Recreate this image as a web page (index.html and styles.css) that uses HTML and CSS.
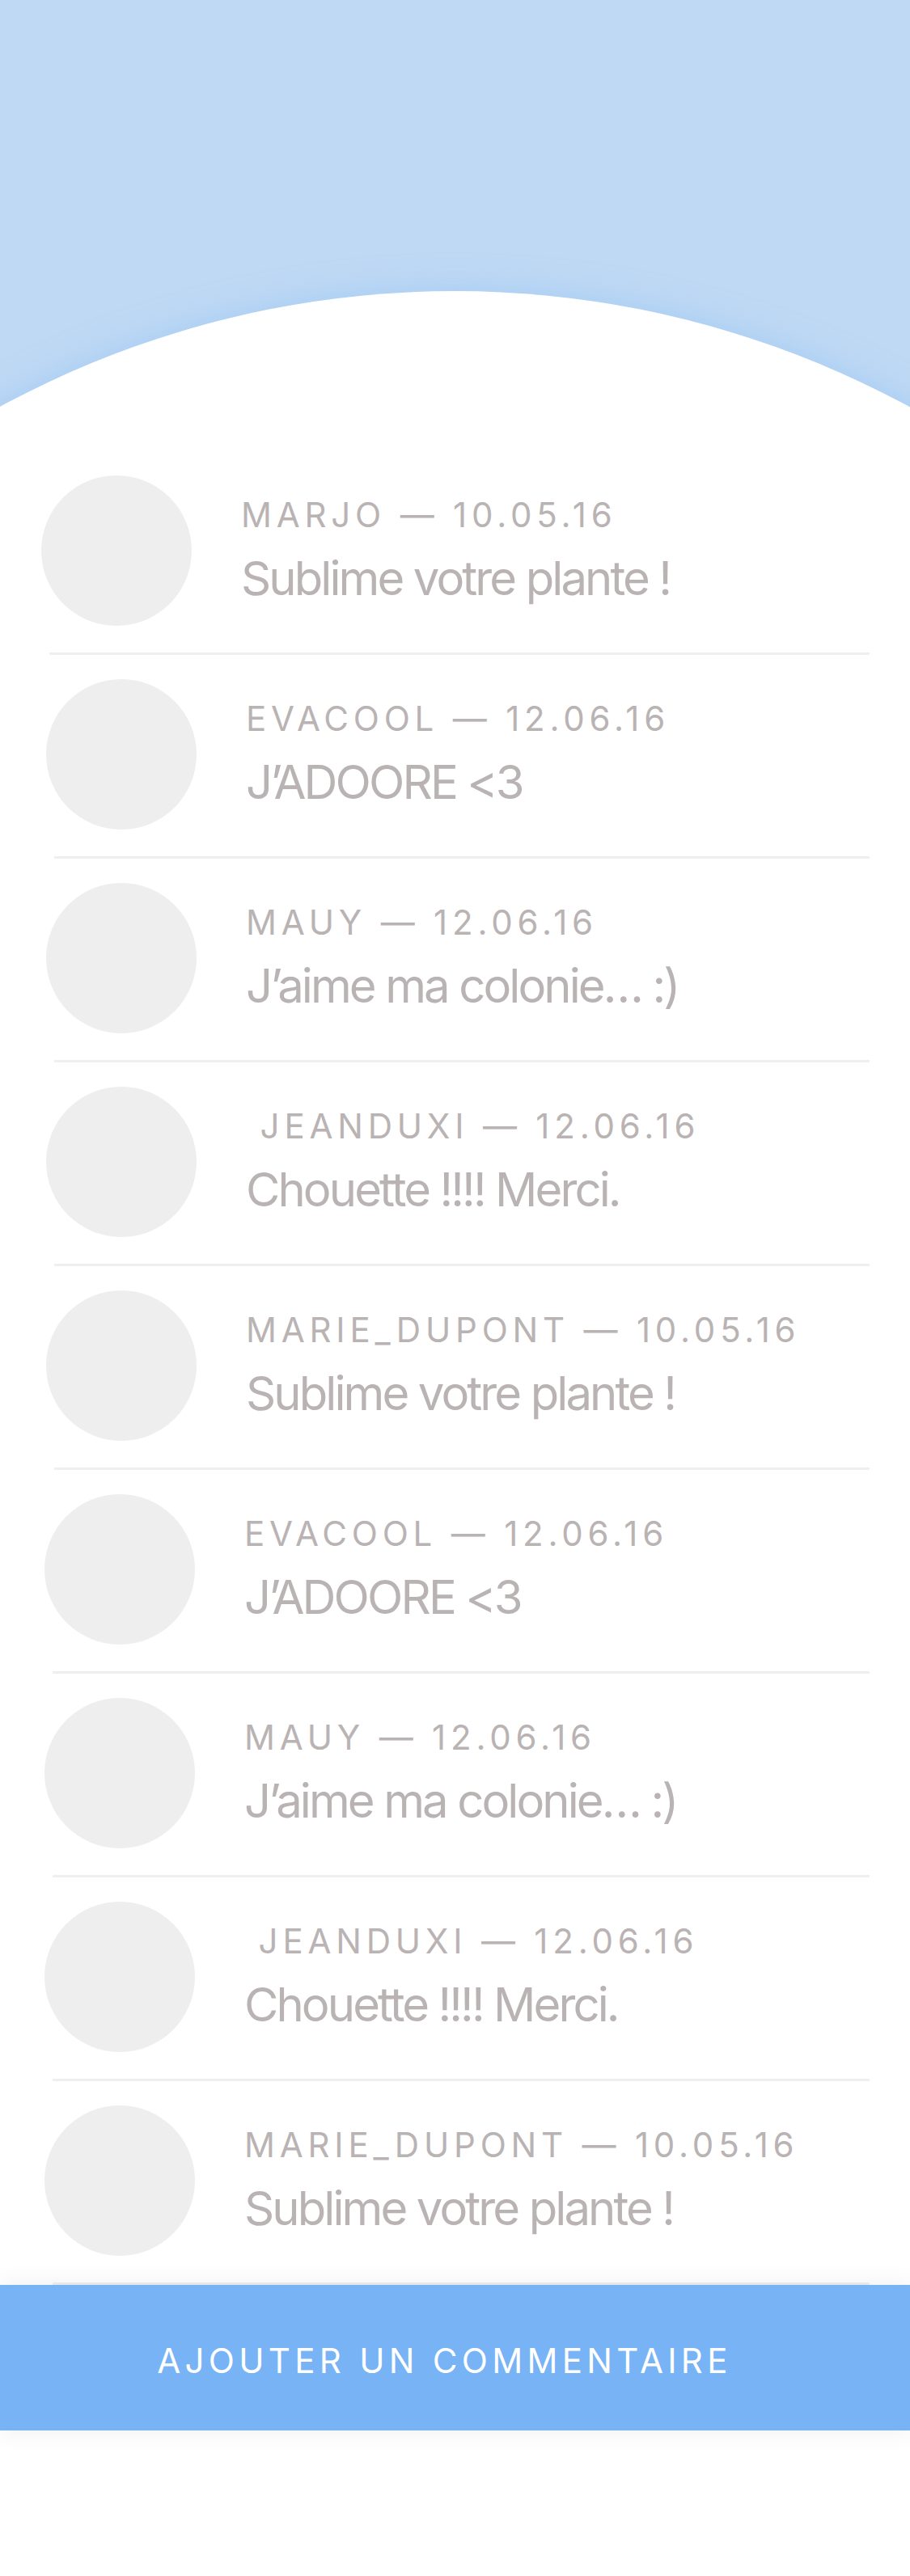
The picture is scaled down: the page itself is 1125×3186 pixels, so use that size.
FILE: index.html
```html
<!DOCTYPE html>
<html lang="fr">
<head>
<meta charset="utf-8">
<title>Commentaires</title>
<link rel="stylesheet" href="styles.css">
</head>
<body>
<div class="screen">
  <header class="hero"></header>
  <main class="comments">
    <ul class="list">
      <li class="comment comment--first">
        <div class="avatar"></div>
        <div class="body">
          <p class="meta">MARJO — 10.05.16</p>
          <p class="text">Sublime votre plante !</p>
        </div>
      </li>
      <li class="comment comment--mid">
        <div class="avatar"></div>
        <div class="body">
          <p class="meta">EVACOOL — 12.06.16</p>
          <p class="text">J’ADOORE &lt;3</p>
        </div>
      </li>
      <li class="comment comment--mid">
        <div class="avatar"></div>
        <div class="body">
          <p class="meta">MAUY — 12.06.16</p>
          <p class="text">J’aime ma colonie… :)</p>
        </div>
      </li>
      <li class="comment comment--mid">
        <div class="avatar"></div>
        <div class="body">
          <p class="meta">&nbsp;JEANDUXI — 12.06.16</p>
          <p class="text">Chouette !!!! Merci.</p>
        </div>
      </li>
      <li class="comment comment--mid">
        <div class="avatar"></div>
        <div class="body">
          <p class="meta">MARIE_DUPONT — 10.05.16</p>
          <p class="text">Sublime votre plante !</p>
        </div>
      </li>
      <li class="comment comment--last">
        <div class="avatar"></div>
        <div class="body">
          <p class="meta">EVACOOL — 12.06.16</p>
          <p class="text">J’ADOORE &lt;3</p>
        </div>
      </li>
      <li class="comment comment--last">
        <div class="avatar"></div>
        <div class="body">
          <p class="meta">MAUY — 12.06.16</p>
          <p class="text">J’aime ma colonie… :)</p>
        </div>
      </li>
      <li class="comment comment--last">
        <div class="avatar"></div>
        <div class="body">
          <p class="meta">&nbsp;JEANDUXI — 12.06.16</p>
          <p class="text">Chouette !!!! Merci.</p>
        </div>
      </li>
      <li class="comment comment--last">
        <div class="avatar"></div>
        <div class="body">
          <p class="meta">MARIE_DUPONT — 10.05.16</p>
          <p class="text">Sublime votre plante !</p>
        </div>
      </li>
    </ul>
  </main>
  <footer class="footer">
    <button class="add" type="button">AJOUTER UN COMMENTAIRE</button>
  </footer>
</div>
</body>
</html>
```

FILE: styles.css
```css
* {
  box-sizing: border-box;
}

html,
body {
  margin: 0;
  padding: 0;
  background: #ffffff;
}

body {
  font-family: Inter, "Noto Sans", "Liberation Sans", sans-serif;
  color: #bab3b4;
}

.screen {
  width: 1125px;
  min-height: 3186px;
  background: #ffffff;
  overflow: hidden;
}

.hero {
  position: relative;
  height: 558px;
  background: #bfd9f4;
  overflow: hidden;
}

.hero::after {
  content: "";
  position: absolute;
  top: 360px;
  left: -614px;
  width: 2352px;
  height: 2352px;
  border-radius: 50%;
  background: #ffffff;
  box-shadow: 0 0 40px rgba(150, 195, 244, 0.65);
}

.comments {
  background: #ffffff;
}

.list {
  list-style: none;
  margin: 0;
  padding: 0;
}

.comment {
  display: flex;
  align-items: flex-start;
  margin-right: 50px;
  padding-top: 30px;
  padding-bottom: 33px;
  border-bottom: 3px solid #efefef;
}

.comment--first {
  margin-left: 61px;
}

.comment--mid {
  margin-left: 67px;
}

.comment--last {
  margin-left: 65px;
}

.avatar {
  flex: none;
  width: 186px;
  height: 186px;
  margin-left: -10px;
  border-radius: 50%;
  background: #eeeeee;
}

.body {
  margin-left: 61px;
  padding-top: 24px;
}

.meta {
  margin: 0;
  font-size: 42px;
  line-height: 50px;
  letter-spacing: 5.8px;
  white-space: nowrap;
}

.text {
  margin: 18px 0 0;
  font-size: 58px;
  line-height: 70px;
  letter-spacing: -2.9px;
  white-space: nowrap;
}

.footer {
  padding-bottom: 180px;
}

.add {
  display: block;
  width: 100%;
  height: 180px;
  margin: 0;
  padding: 6px 26px 0 0;
  border: 0;
  background: #77b3f5;
  color: #ffffff;
  font-family: Inter, "Noto Sans", "Liberation Sans", sans-serif;
  font-size: 42px;
  letter-spacing: 5.3px;
  box-shadow: 0 0 30px rgba(0, 0, 0, 0.07);
}
```
